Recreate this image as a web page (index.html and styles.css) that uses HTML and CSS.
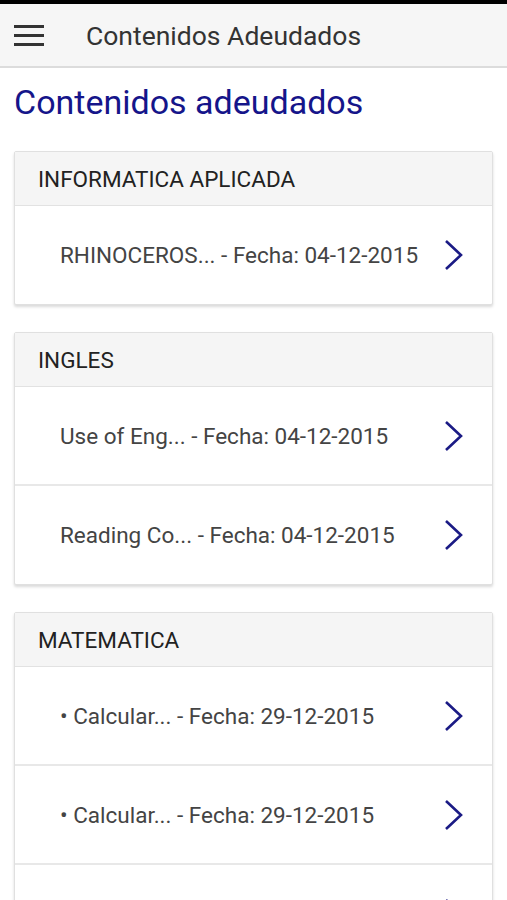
FILE: index.html
```html
<!DOCTYPE html>
<html lang="es">
<head>
    <meta charset="UTF-8">
    <meta name="viewport" content="width=device-width, initial-scale=1.0">
    <title>Contenidos Adeudados</title>
    <link rel="stylesheet" href="styles.css">
</head>
<body>
    <div class="status"></div>
    <div class="toolbar">
        <div class="menu">
            <span></span>
            <span></span>
            <span></span>
        </div>
        <div class="toolbar-title">Contenidos Adeudados</div>
    </div>

    <div class="content">
        <h1 class="page-title">Contenidos adeudados</h1>

        <div class="card">
            <div class="card-header">INFORMATICA APLICADA</div>
            <div class="row">
                <span class="row-text">RHINOCEROS... - Fecha: 04-12-2015</span>
                <svg class="chevron" width="20" height="32" viewBox="0 0 20 32"><path d="M2 2 L17 16 L2 30" fill="none" stroke="#1b1b85" stroke-width="2.6"/></svg>
            </div>
        </div>

        <div class="card">
            <div class="card-header">INGLES</div>
            <div class="row">
                <span class="row-text">Use of Eng... - Fecha: 04-12-2015</span>
                <svg class="chevron" width="20" height="32" viewBox="0 0 20 32"><path d="M2 2 L17 16 L2 30" fill="none" stroke="#1b1b85" stroke-width="2.6"/></svg>
            </div>
            <div class="row">
                <span class="row-text">Reading Co... - Fecha: 04-12-2015</span>
                <svg class="chevron" width="20" height="32" viewBox="0 0 20 32"><path d="M2 2 L17 16 L2 30" fill="none" stroke="#1b1b85" stroke-width="2.6"/></svg>
            </div>
        </div>

        <div class="card">
            <div class="card-header">MATEMATICA</div>
            <div class="row">
                <span class="row-text">• Calcular... - Fecha: 29-12-2015</span>
                <svg class="chevron" width="20" height="32" viewBox="0 0 20 32"><path d="M2 2 L17 16 L2 30" fill="none" stroke="#1b1b85" stroke-width="2.6"/></svg>
            </div>
            <div class="row">
                <span class="row-text">• Calcular... - Fecha: 29-12-2015</span>
                <svg class="chevron" width="20" height="32" viewBox="0 0 20 32"><path d="M2 2 L17 16 L2 30" fill="none" stroke="#1b1b85" stroke-width="2.6"/></svg>
            </div>
            <div class="row">
                <span class="row-text"></span>
                <svg class="chevron" width="20" height="32" viewBox="0 0 20 32"><path d="M2 2 L17 16 L2 30" fill="none" stroke="#1b1b85" stroke-width="2.6"/></svg>
            </div>
        </div>
    </div>
</body>
</html>
```

FILE: styles.css
```css
body {
    font-family: Roboto, "Liberation Sans", sans-serif;
    margin: 0;
    padding: 0;
    background-color: #fff;
    overflow: hidden;
    height: 900px;
}

.status {
    height: 4px;
    background-color: #000;
}

.toolbar {
    height: 62px;
    background-color: #f6f6f6;
    border-bottom: 2px solid #dcdcdc;
    display: flex;
    align-items: center;
}

.menu {
    width: 30px;
    margin-left: 14px;
    margin-right: 42px;
    display: flex;
    flex-direction: column;
    gap: 6px;
}

.menu span {
    display: block;
    height: 3px;
    background-color: #333;
}

.toolbar-title {
    font-size: 26.5px;
    color: #333;
}

.content {
    padding: 0 14px;
}

.page-title {
    margin: 0;
    padding: 13px 0 0 0;
    height: 83px;
    box-sizing: border-box;
    font-size: 34px;
    font-weight: 400;
    color: #15158a;
    line-height: 42px;
}

.card {
    background-color: #fff;
    border: 1px solid #e0e0e0;
    border-radius: 2px;
    box-shadow: 0 2px 3px rgba(0, 0, 0, 0.15);
    margin-bottom: 27px;
}

.card-header {
    height: 53px;
    background-color: #f5f5f5;
    border-bottom: 1px solid #e2e2e2;
    display: flex;
    align-items: center;
    padding-left: 23px;
    font-size: 22.5px;
    color: #222;
}

.row {
    height: 97px;
    display: flex;
    align-items: center;
    justify-content: space-between;
    padding: 0 28px 0 45px;
    border-bottom: 2px solid #e8e8e8;
}

.row:last-child {
    height: 98px;
    border-bottom: none;
}

.row-text {
    font-size: 22.5px;
    color: #444;
}

.chevron {
    display: block;
}
```
